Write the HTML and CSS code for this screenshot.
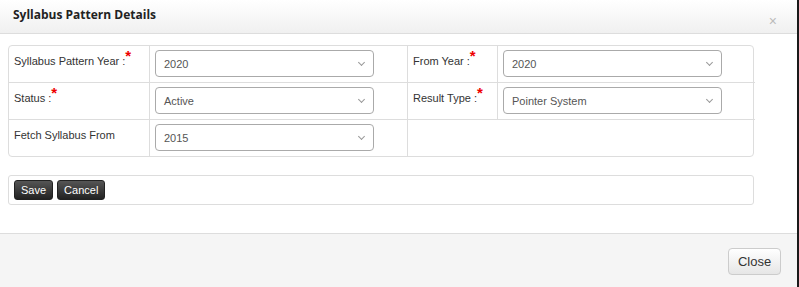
FILE: index.html
```html
<!DOCTYPE html>
<html lang="en">
<head>
    <meta charset="UTF-8">
    <title>Syllabus Pattern Details</title>
    <link rel="stylesheet" href="styles.css">
</head>
<body>
    <div class="modal">
        <div class="modal-header">
            <div class="modal-title">Syllabus Pattern Details</div>
            <span class="close-x">&times;</span>
        </div>
        <div class="modal-body">
            <div class="form-grid">
                <!-- Row 1 -->
                <div class="label">Syllabus Pattern Year :<span class="req">*</span></div>
                <div class="field">
                    <div class="select">2020</div>
                </div>
                <div class="label">From Year :<span class="req">*</span></div>
                <div class="field last">
                    <div class="select">2020</div>
                </div>

                <!-- Row 2 -->
                <div class="label">Status :<span class="req">*</span></div>
                <div class="field">
                    <div class="select">Active</div>
                </div>
                <div class="label">Result Type :<span class="req">*</span></div>
                <div class="field last">
                    <div class="select">Pointer System</div>
                </div>

                <!-- Row 3 -->
                <div class="label bottom">Fetch Syllabus From</div>
                <div class="field bottom">
                    <div class="select">2015</div>
                </div>
                <div class="empty bottom"></div>
            </div>

            <div class="button-panel">
                <button class="btn-dark">Save</button>
                <button class="btn-dark">Cancel</button>
            </div>
        </div>
        <div class="modal-footer">
            <button class="btn-light">Close</button>
        </div>
    </div>
</body>
</html>
```

FILE: styles.css
```css
body {
    margin: 0;
    padding: 0;
    background-color: #fff;
    font-family: "Liberation Sans", Arial, sans-serif;
    color: #333;
}
.modal {
    width: 797px;
    height: 287px;
    border-right: 2px solid #1a1a1a;
    display: flex;
    flex-direction: column;
}
.modal-header {
    height: 33px;
    border-bottom: 1px solid #ddd;
    background: linear-gradient(to bottom, #ffffff, #f0f0f0);
    position: relative;
}
.modal-title {
    font-family: "Open Sans", sans-serif;
    font-weight: bold;
    font-size: 12px;
    color: #222;
    padding: 6px 0 0 13px;
}
.close-x {
    position: absolute;
    right: 20px;
    top: 14px;
    font-size: 14px;
    color: #bbb;
    line-height: 14px;
}
.modal-body {
    flex: 1;
    padding: 11px 8px 0 8px;
}
.form-grid {
    width: 746px;
    display: grid;
    grid-template-columns: 141px 258px 90px 257px;
    grid-template-rows: 37px 37px 36px;
    border: 1px solid #ddd;
    border-radius: 4px;
    box-sizing: border-box;
}
.label,
.field,
.empty {
    border-right: 1px solid #ddd;
    border-bottom: 1px solid #ddd;
}
.label {
    font-size: 11px;
    line-height: 14px;
    padding: 8px 5px 0 5px;
    color: #333;
}
.req {
    color: #e00;
    font-size: 15px;
    font-weight: bold;
    line-height: 10px;
    position: relative;
    top: -4px;
    margin-left: 0;
}
.field {
    padding: 4px 5px 0 5px;
}
.field.last {
    border-right: none;
}
.empty {
    grid-column: span 2;
    border-right: none;
}
.bottom {
    border-bottom: none;
}
.select {
    width: 219px;
    height: 27px;
    box-sizing: border-box;
    border: 1px solid #aaa;
    border-radius: 4px;
    padding: 1px 8px 0 8px;
    font-size: 11px;
    line-height: 25px;
    color: #555;
    position: relative;
}
.select::after {
    content: "";
    position: absolute;
    right: 9px;
    top: 9px;
    width: 4px;
    height: 4px;
    border-right: 1px solid #999;
    border-bottom: 1px solid #999;
    transform: rotate(45deg);
}
.button-panel {
    width: 746px;
    height: 30px;
    box-sizing: border-box;
    margin-top: 18px;
    border: 1px solid #ddd;
    border-radius: 3px;
    padding: 4px 5px;
    display: flex;
    gap: 4px;
}
.btn-dark {
    height: 20px;
    padding: 0 6px;
    font-family: "Liberation Sans", Arial, sans-serif;
    font-size: 11px;
    color: #fff;
    background: linear-gradient(to bottom, #555, #222);
    border: 1px solid #222;
    border-radius: 3px;
}
.modal-footer {
    height: 54px;
    border-top: 1px solid #ddd;
    background-color: #f5f5f5;
    display: flex;
    justify-content: flex-end;
    padding: 14px 16px 0 0;
    box-sizing: border-box;
    align-items: flex-start;
}
.btn-light {
    width: 53px;
    height: 27px;
    font-family: "Liberation Sans", Arial, sans-serif;
    font-size: 13px;
    color: #333;
    background: linear-gradient(to bottom, #fff, #e6e6e6);
    border: 1px solid #ccc;
    border-radius: 4px;
}
```
